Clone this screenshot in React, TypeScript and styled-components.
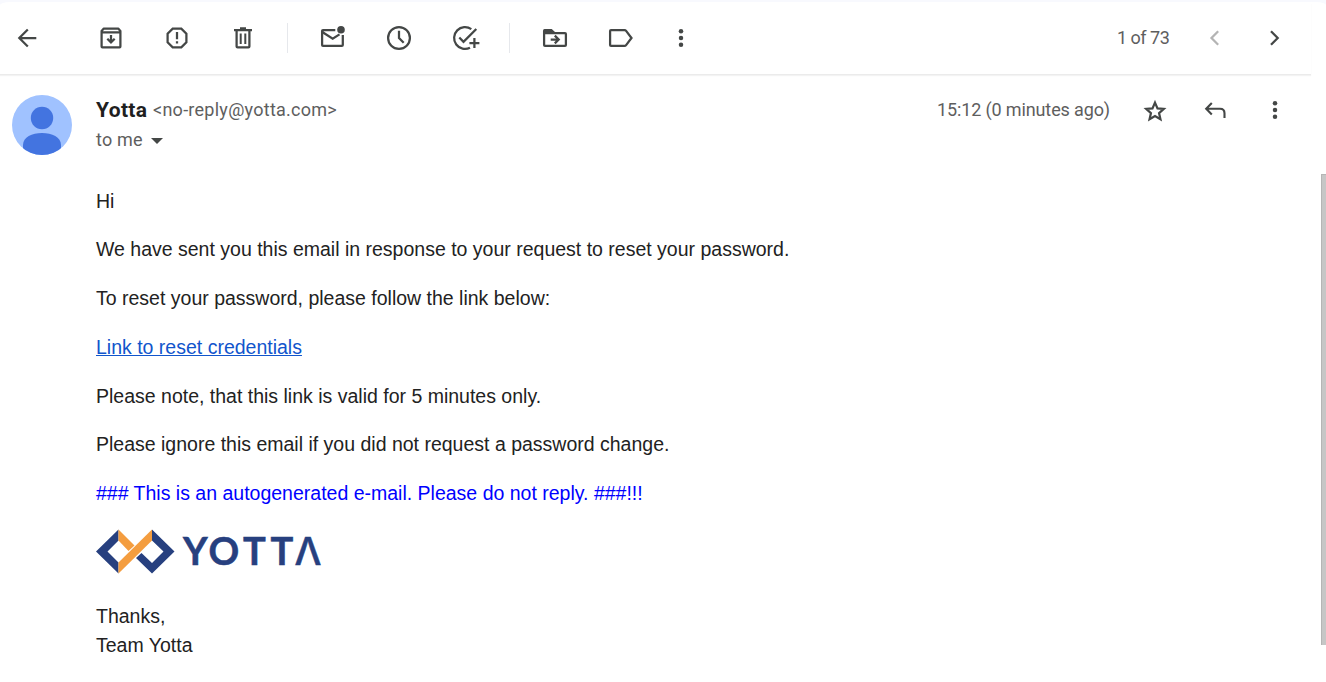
import React from "react";
import styled, { createGlobalStyle } from "styled-components";

const Global = createGlobalStyle`
  * { box-sizing: border-box; }
  body { margin: 0; background: #f8f9ff; overflow: hidden; }
`;

const Page = styled.div`
  height: 682px;
  width: 1326px;
  padding-top: 2px;
  background: #f8f9fe;
  font-family: Roboto, "Liberation Sans", sans-serif;
  color: #5e5e5e;
`;

const Card = styled.main`
  height: 680px;
  background: #fff;
  border-radius: 10px 10px 0 0 / 3px 3px 0 0;
`;

const Toolbar = styled.header`
  width: 1311px;
  height: 72px;
  padding: 0 22px 0 12px;
  display: flex;
  align-items: center;
  box-shadow: 0 1px 0 #ebebeb, 0 2px 1px #f3f3f3;
`;

const Group = styled.div<{ $left: number; $gap?: number }>`
  display: flex;
  align-items: center;
  margin-left: ${(p) => p.$left}px;
  gap: ${(p) => p.$gap ?? 36}px;
`;

const Separator = styled.span<{ $left: number }>`
  width: 1px;
  height: 30px;
  margin-left: ${(p) => p.$left}px;
  background: #e6e8ec;
`;

const Counter = styled.span`
  width: 60px;
  margin-left: auto;
  padding-bottom: 1px;
  font-size: 18px;
  letter-spacing: -0.5px;
  white-space: nowrap;
`;

const IconButton = styled.button<{ $muted?: boolean }>`
  display: block;
  width: 30px;
  height: 30px;
  padding: 0;
  border: 0;
  background: none;
  color: ${(p) => (p.$muted ? "#b4b4b4" : "#444746")};
  svg { display: block; }
`;

const Scroller = styled.div`
  display: flex;
  height: 608px;
`;

const Message = styled.article`
  flex: 1;
  padding: 21px 0 0 12px;
  display: grid;
  grid-template-columns: 84px 1fr;
  align-content: start;
`;

const ScrollTrack = styled.div`
  width: 5px;
  padding-top: 100px;
`;

const ScrollThumb = styled.div`
  height: 471px;
  background: #c6c6c6;
  border-left: 1px solid #b5b5b5;
  border-top: 1px solid #b5b5b5;
`;

const MessageHead = styled.div`
  display: flex;
  height: 91.5px;
`;

const Sender = styled.div`
  font-size: 18px;
  line-height: 30px;
  white-space: nowrap;
`;

const SenderLine = styled.div`
  display: flex;
  height: 30px;
`;

const Name = styled.strong`
  width: 57px;
  font-size: 21px;
  font-weight: 700;
  letter-spacing: 0.35px;
  color: #1f1f1f;
`;

const Address = styled.span`
  letter-spacing: 0.26px;
`;

const Recipient = styled.div`
  display: flex;
  align-items: center;
  gap: 8px;
  letter-spacing: 0.2px;
  svg { margin-top: 1px; }
`;

const Time = styled.time`
  margin-left: auto;
  width: 203px;
  font-size: 18px;
  line-height: 30px;
  letter-spacing: -0.13px;
  white-space: nowrap;
`;

const HeadActions = styled.div`
  display: flex;
  gap: 30px;
  padding-right: 31px;
`;

const Body = styled.div`
  grid-column: 2;
  font-family: "Liberation Sans", Arial, sans-serif;
  font-size: 19.5px;
  line-height: 29.25px;
  color: #222;
`;

const Paragraph = styled.p<{ $color?: string }>`
  margin: 0 0 19.5px;
  color: ${(p) => p.$color ?? "inherit"};
`;

const Link = styled.a`
  color: #1155cc;
  text-decoration: underline;
`;

const LogoWrap = styled.div`
  height: 73.9px;
  padding-top: 1px;
  svg { display: block; overflow: visible; }
`;

function Icon({ children }: { children: React.ReactNode }) {
  return (
    <svg width="30" height="30" viewBox="0 0 30 30" fill="none" stroke="currentColor" strokeWidth="2.25">
      {children}
    </svg>
  );
}

function Action({ label, muted, children }: { label: string; muted?: boolean; children: React.ReactNode }) {
  return (
    <IconButton aria-label={label} $muted={muted}>
      <Icon>{children}</Icon>
    </IconButton>
  );
}

const Dots = () => (
  <g fill="currentColor" stroke="none">
    <circle cx="15" cy="8.2" r="2.25" />
    <circle cx="15" cy="15" r="2.25" />
    <circle cx="15" cy="21.7" r="2.25" />
  </g>
);

const Avatar = () => (
  <svg width="60" height="60" viewBox="0 0 60 60">
    <defs>
      <clipPath id="avatar"><circle cx="30" cy="30" r="30" /></clipPath>
    </defs>
    <g clipPath="url(#avatar)">
      <rect width="60" height="60" fill="#a0c2ff" />
      <circle cx="30" cy="23" r="11.2" fill="#4374e0" />
      <path d="M11 62V50C11 42 20 38 30 38s19 4 19 12v12z" fill="#4374e0" />
    </g>
  </svg>
);

const Logo = () => (
  <svg width="230" height="46" viewBox="0 0 230 46" role="img" aria-label="Yotta">
    <g fill="#27407f">
      <path d="M22.5 0.5V11.5L11.5 22.5L22.5 33.5V44.5L0 22.5z" />
      <path d="M56 0.5L78.5 22.5L56 44.5L40 29L45.5 24L56 34L67.5 22.5L56 11.5z" />
    </g>
    <g fill="#f49d3f">
      <path d="M22.5 0.5L38.5 16.5L32.5 22L22.5 11.5z" />
      <path d="M56 0.5V11.5L22.5 44.5V33.5z" />
    </g>
    <g fill="#27407f" stroke="#27407f" strokeWidth="0.5" fontWeight="700">
      <text x="87 112.5 147 174.500" y="36.300" fontFamily="Lato, sans-serif" fontSize="38">
        YOTT
      </text>
      <text x="198.500" y="36.300" fontFamily="Inter, sans-serif" fontWeight="500" fontSize="38">Λ</text>
    </g>
  </svg>
);

export default function App() {
  return (
    <Page>
      <Global />
      <Card>
        <Toolbar>
          <Action label="Back">
            <path d="M24.3 15H8M15.8 6.5L7.3 15l8.5 8.5" />
          </Action>
          <Group $left={54}>
            <Action label="Archive">
              <path d="M5.6 8L7.8 5.6H22.2L24.4 8V23.6q0 .8-.8.8H6.4q-.8 0-.8-.8zM5.6 9.4H24.4" strokeLinejoin="round" />
              <path d="M15 12v7M11.3 15.7L15 19.4l3.7-3.7" />
            </Action>
            <Action label="Report spam">
              <path d="M10.7 5.6h8.6l5.1 5.1v8.6l-5.1 5.1h-8.6l-5.1-5.1v-8.6zM15 9v7.3M15 18.3v2.3" />
            </Action>
            <Action label="Delete">
              <path d="M6 7h18M12 5.4h6M8.6 7v16.4q0 1 1 1h10.8q1 0 1-1V7" />
              <path d="M12.7 10.5V21M17.3 10.5V21" strokeWidth="2" />
            </Action>
          </Group>
          <Separator $left={29} />
          <Group $left={30}>
            <Action label="Mark as unread">
              <path d="M17.3 7.2H5q-.9 0-.9.9v13.8q0 .9.9.9h18.900q.9 0 .9-.9V12M4.300 9L14.700 15.600l6.800-4.200" />
              <circle cx="23" cy="6.800" r="3.800" fill="currentColor" stroke="none" />
            </Action>
            <Action label="Snooze">
              <circle cx="15" cy="15" r="10.9" />
              <path d="M15 7.7V15l4.7 4.7" />
            </Action>
            <Action label="Add to tasks">
              <path d="M21.3 6.1A10.9 10.9 0 1 0 20 24.7M9.3 14.5l4.2 4.3L26.3 6M24.4 15v10M19.4 20h10" />
            </Action>
          </Group>
          <Separator $left={29} />
          <Group $left={30}>
            <Action label="Move to">
              <path d="M4.1 8v14q0 .9.9.9h20q.9 0 .9-.9V11q0-.9-.9-.9H5" />
              <path d="M3 11V7.5Q3 6 4.5 6h7.2L15 9v2z" fill="currentColor" stroke="none" />
              <path d="M10.7 16.5h7.6M14.8 12.6l3.9 3.9-3.9 3.9" />
            </Action>
            <Action label="Labels">
              <path d="M5 7.1h13.500q1 0 1.600.8L25.500 15l-5.400 7.100q-.6.8-1.600.8H5q-.9 0-.9-.9V8q0-.9.900-.9z" />
            </Action>
          </Group>
          <Group $left={30}>
            <Action label="More"><Dots /></Action>
          </Group>
          <Counter>1 of 73</Counter>
          <Group $left={23} $gap={29}>
            <Action label="Newer" muted><path d="M18.2 8.3L11.5 15l6.7 6.7" /></Action>
            <Action label="Older"><path d="M12 8.3l6.7 6.7-6.7 6.7" /></Action>
          </Group>
        </Toolbar>
        <Scroller>
          <Message>
            <Avatar />
            <MessageHead>
              <Sender>
                <SenderLine>
                  <Name>Yotta</Name>
                  <Address>&lt;no-reply@yotta.com&gt;</Address>
                </SenderLine>
                <Recipient>
                  to me
                  <svg width="12" height="6" viewBox="0 0 12 6"><path d="M0 0h12L6 6z" fill="#444746" /></svg>
                </Recipient>
              </Sender>
              <Time>15:12 (0 minutes ago)</Time>
              <HeadActions>
                <Action label="Star">
                  <path d="M15 7.600l2.500 5.800 6.300.55-4.750 4.150 1.400 6.150L15 21L9.550 24.250l1.400-6.150-4.750-4.150 6.300-.55z" strokeWidth="2.200" />
                </Action>
                <Action label="Reply">
                  <path d="M11.8 8L6.2 13.8l5.6 5.6M6.7 13.8H20q4.500 0 4.500 4.500V23" strokeWidth="2.1" />
                </Action>
                <Action label="More options"><Dots /></Action>
              </HeadActions>
            </MessageHead>
            <Body>
              <Paragraph>Hi</Paragraph>
              <Paragraph>We have sent you this email in response to your request to reset your password.</Paragraph>
              <Paragraph>To reset your password, please follow the link below:</Paragraph>
              <Paragraph><Link href="#">Link to reset credentials</Link></Paragraph>
              <Paragraph>Please note, that this link is valid for 5 minutes only.</Paragraph>
              <Paragraph>Please ignore this email if you did not request a password change.</Paragraph>
              <Paragraph $color="#0000ff">### This is an autogenerated e-mail. Please do not reply. ###!!!</Paragraph>
              <LogoWrap><Logo /></LogoWrap>
              <Paragraph>Thanks,<br />Team Yotta</Paragraph>
            </Body>
          </Message>
          <ScrollTrack><ScrollThumb /></ScrollTrack>
        </Scroller>
      </Card>
    </Page>
  );
}
